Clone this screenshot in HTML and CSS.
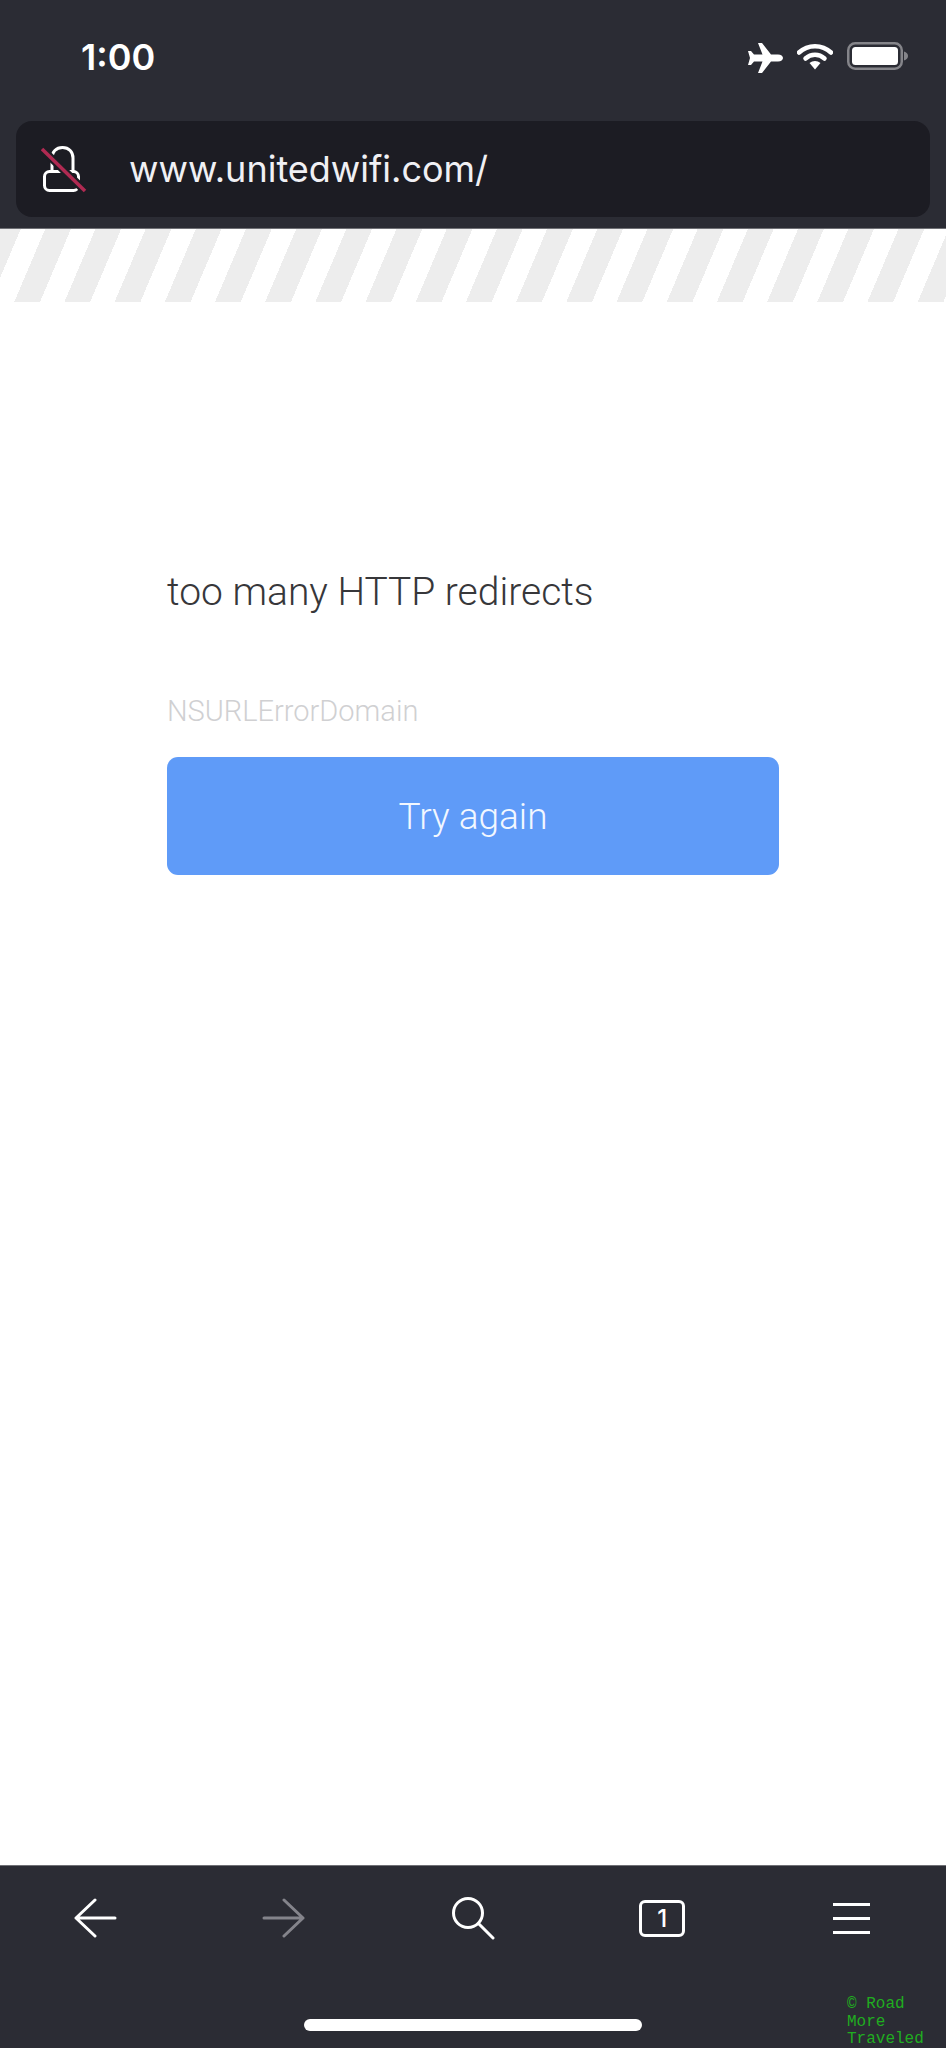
FILE: index.html
```html
<!DOCTYPE html>
<html lang="en">
<head>
    <meta charset="UTF-8">
    <meta name="viewport" content="width=device-width, initial-scale=1.0">
    <title>too many HTTP redirects</title>
    <link rel="stylesheet" href="styles.css">
</head>
<body>
    <header class="top-bar">
        <div class="status-bar">
            <span class="time">1:00</span>
            <div class="status-icons">
                <svg class="icon-plane" width="36" height="32" viewBox="0 0 36 32">
                    <path d="M11 1h4l9 11.500h7c3 0 5 1.600 5 3.500s-2 3.500-5 3.500h-7L15 31h-4l4.500-11.500H7l-3 3.500H1l2-7-2-7h3l3 3.500h8.500z" fill="#fff"/>
                </svg>
                <svg class="icon-wifi" width="36" height="28" viewBox="0 0 36 28">
                    <path d="M2 10.500C11 2 25 2 34 10.500" fill="none" stroke="#fff" stroke-width="4.500" stroke-linecap="round"/>
                    <path d="M8.500 16.500c5.500-5 13.500-5 19 0" fill="none" stroke="#fff" stroke-width="4.500" stroke-linecap="round"/>
                    <path d="M12.500 21c3.200-2.800 7.800-2.800 11 0L18 27.500z" fill="#fff"/>
                </svg>
                <svg class="icon-battery" width="61" height="28" viewBox="0 0 61 28">
                    <rect x="1.250" y="1.250" width="53.500" height="25.500" rx="7" fill="none" stroke="#85858a" stroke-width="2.500"/>
                    <rect x="5" y="5" width="46" height="18" rx="3.500" fill="#fff"/>
                    <path d="M57 9.500c2.500.6 4 2.300 4 4.500s-1.500 3.900-4 4.500z" fill="#85858a"/>
                </svg>
            </div>
        </div>
        <div class="url-bar">
            <svg class="icon-lock" width="46" height="48" viewBox="0 0 46 48">
                <path d="M11 26V13C11 7 15 2.500 21.500 2.500S32 7 32 13v13" fill="none" stroke="#fff" stroke-width="3"/>
                <rect x="3.500" y="26.500" width="34" height="19" rx="5" fill="#1c1c23" stroke="#fff" stroke-width="3"/>
                <path d="M1 4l43 42" stroke="#1c1c23" stroke-width="8"/>
                <path d="M1 4l43 42" stroke="#b02a52" stroke-width="3.500"/>
            </svg>
            <span class="url">www.unitedwifi.com/</span>
        </div>
    </header>

    <div class="stripes"></div>

    <main class="error-page">
        <h1 class="error-title">too many HTTP redirects</h1>
        <p class="error-domain">NSURLErrorDomain</p>
        <button class="retry">Try again</button>
    </main>

    <footer class="bottom-bar">
        <nav class="toolbar">
            <div class="tool">
                <svg width="44" height="40" viewBox="0 0 44 40">
                    <path d="M22 2L3 20l19 18M3 20h39" fill="none" stroke="#fff" stroke-width="3" stroke-linecap="round" stroke-linejoin="round"/>
                </svg>
            </div>
            <div class="tool">
                <svg width="44" height="40" viewBox="0 0 44 40">
                    <path d="M22 2l19 18-19 18M41 20H2" fill="none" stroke="#84848b" stroke-width="3" stroke-linecap="round" stroke-linejoin="round"/>
                </svg>
            </div>
            <div class="tool">
                <svg width="44" height="44" viewBox="0 0 44 44">
                    <circle cx="17" cy="17" r="14.500" fill="none" stroke="#fff" stroke-width="3"/>
                    <path d="M27.500 27.500L42 42" stroke="#fff" stroke-width="3" stroke-linecap="round"/>
                </svg>
            </div>
            <div class="tool">
                <div class="tab-count">1</div>
            </div>
            <div class="tool">
                <div class="menu-lines"><span></span><span></span><span></span></div>
            </div>
        </nav>
        <div class="home-indicator"></div>
        <div class="watermark">© Road<br>More<br>Traveled</div>
    </footer>
</body>
</html>
```

FILE: styles.css
```css
* {
    margin: 0;
    padding: 0;
    box-sizing: border-box;
}

body {
    width: 946px;
    height: 2048px;
    display: flex;
    flex-direction: column;
    background: #fff;
    font-family: Inter, 'Noto Sans', sans-serif;
    overflow: hidden;
}

.top-bar {
    height: 229px;
    background: #2b2c34;
    border-bottom: 1px solid #6f7075;
    padding: 0 16px;
}

.status-bar {
    height: 121px;
    display: flex;
    justify-content: space-between;
    padding: 38px 22px 0 65px;
}

.time {
    color: #fff;
    font-size: 36px;
    font-weight: 600;
    line-height: 38px;
}

.status-icons {
    display: flex;
    align-items: flex-start;
    gap: 14px;
    padding-top: 4px;
}

.url-bar {
    height: 96px;
    background: #1c1c23;
    border-radius: 16px;
    display: flex;
    align-items: center;
    padding-left: 25px;
    gap: 42px;
}

.icon-lock {
    flex: none;
}

.url {
    color: #f0f0f4;
    font-size: 36px;
}

.stripes {
    height: 73px;
    background: repeating-linear-gradient(113deg, #ededed -4.600px, #ededed 19.100px, #fff 19.100px, #fff 41.600px);
}

.error-page {
    flex: 1;
    padding: 266px 167px 0 167px;
}

.error-title {
    color: #37373a;
    font-family: Roboto, sans-serif;
    font-size: 39px;
    font-weight: 300;
    line-height: 48px;
}

.error-domain {
    color: #d0d0d2;
    font-family: Roboto, sans-serif;
    font-size: 29px;
    font-weight: 300;
    line-height: 36px;
    margin-top: 77px;
}

.retry {
    display: block;
    width: 612px;
    height: 118px;
    margin-top: 28px;
    background: #5f9bf8;
    border: none;
    border-radius: 11px;
    color: #f2f7ff;
    font-family: Roboto, sans-serif;
    font-size: 37px;
    font-weight: 300;
}

.bottom-bar {
    position: relative;
    height: 183px;
    background: #2b2c34;
    border-top: 1px solid #6f7075;
    padding-top: 30px;
}

.toolbar {
    display: grid;
    grid-template-columns: repeat(5, 1fr);
    height: 44px;
}

.tool {
    display: flex;
    align-items: center;
    justify-content: center;
}

.tab-count {
    width: 46px;
    height: 37px;
    border: 3px solid #fff;
    border-radius: 6px;
    color: #fff;
    font-size: 24px;
    font-weight: 500;
    line-height: 31px;
    text-align: center;
}

.menu-lines {
    width: 37px;
    display: flex;
    flex-direction: column;
    gap: 11px;
}

.menu-lines span {
    height: 3px;
    background: #fff;
}

.home-indicator {
    width: 338px;
    height: 12px;
    margin: 79px auto 0;
    background: #fff;
    border-radius: 6px;
}

/* sits on top of the screenshot corner */
.watermark {
    position: absolute;
    left: 847px;
    top: 130px;
    color: #20ad20;
    font-family: 'Liberation Mono', monospace;
    font-size: 16px;
    line-height: 17.500px;
}
```
